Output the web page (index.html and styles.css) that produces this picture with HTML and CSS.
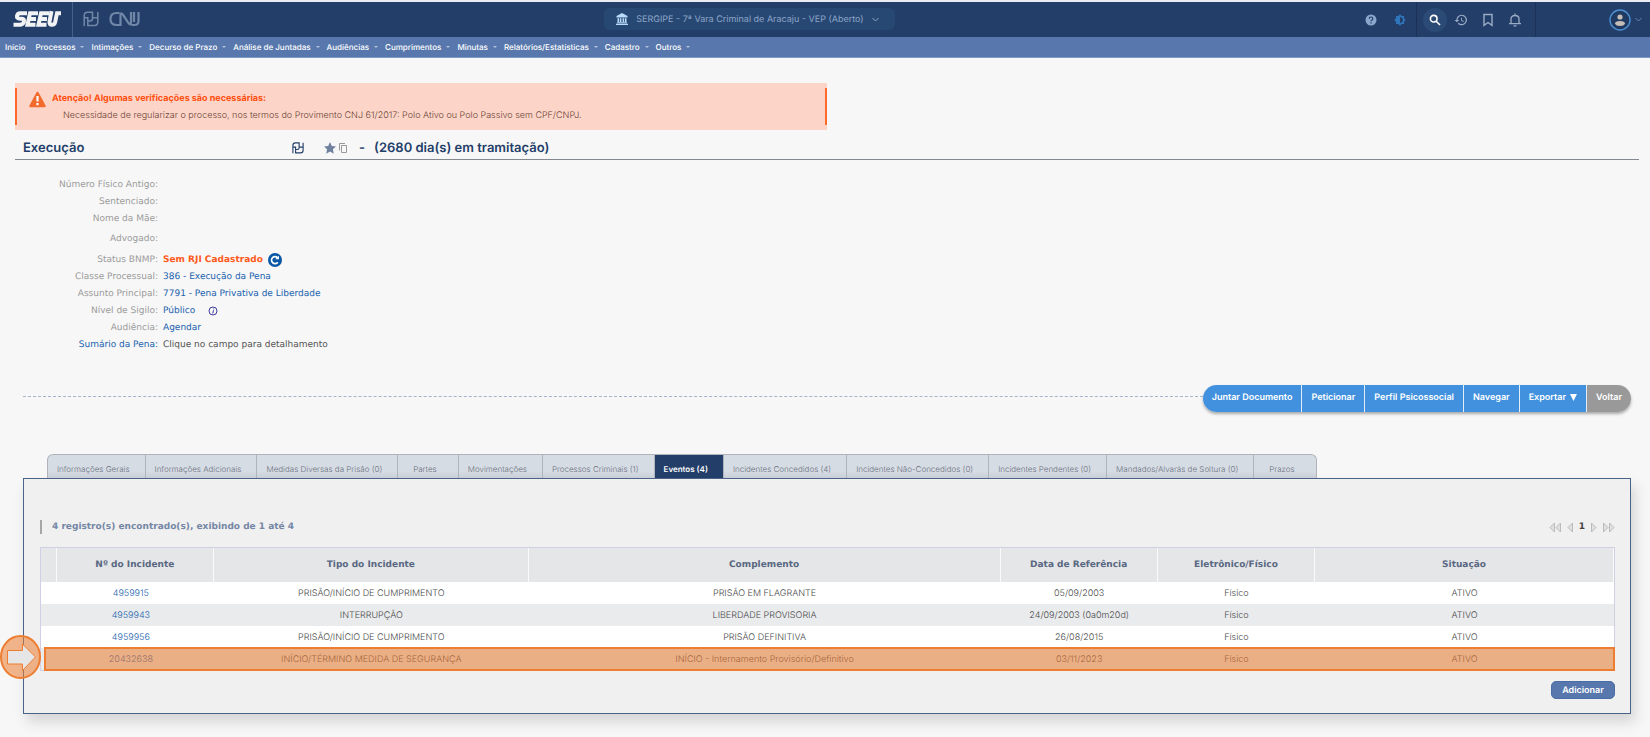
FILE: index.html
```html
<!DOCTYPE html>
<html lang="pt-BR">
<head>
<meta charset="utf-8">
<meta name="viewport" content="width=device-width, initial-scale=1">
<title>SEEU - Execução</title>
<link rel="stylesheet" href="styles.css">
</head>
<body>
<svg class="defs" aria-hidden="true">
  <symbol id="pdpj" viewBox="0 0 16 16"><path d="M1.200 15V4.500Q1.200 1.200 4.500 1.200H9.500V7.500Q9.500 10 7 10H4.800V6.800H1.200M4.800 10V14.500H11.500Q14.800 14.500 14.800 11V1M14.800 6.800H9.500" fill="none" stroke="currentColor" stroke-width="1.500"/></symbol>
</svg>
<header class="topbar">
  <div class="brand">
    <a class="brand-seeu" href="#" aria-label="SEEU">
      <svg width="48" height="18" viewBox="0 0 48 18" fill="none" stroke="#f0f2f4" stroke-width="4"><path d="M14 3.200H7.500Q4.500 3.200 4 5.800T7 8.800H8.500Q11.500 8.800 11 11.500T7.500 14.800H.5M25 3.200H17L14.500 14.800H22.500M15.500 9H23M36 3.200H28L25.500 14.800H33.500M26.500 9H34M38.500 1.200L36.500 11.500Q36 14.800 39 14.800Q41.500 14.800 42.200 12L44 3.200H48"/></svg>
    </a>
    <a class="brand-cnj" href="#" aria-label="PDPJ CNJ">
      <svg width="16" height="16"><use href="#pdpj"/></svg>
      <svg width="32" height="16" viewBox="0 0 32 16" fill="none" stroke="currentColor" stroke-width="2.200"><path d="M10.500 2H7.500Q1.500 2 1.500 8T7.500 14H10.500M11.500 15V4Q11.500 1 14 3.800L19.500 12Q22 15 22 12V1M25 1V11M29.500 1V10Q29.500 14 25.500 14H22.500"/></svg>
    </a>
  </div>
  <button class="court" type="button">
    <svg width="12" height="12" viewBox="0 0 12 12" fill="#b9dcfa"><path d="M6 0L11.500 3V4.500H.5V3ZM1.500 5.200H3.200V9H1.500ZM4 5.200H5.400V9H4ZM6.600 5.200H8V9H6.600ZM8.800 5.200H10.500V9H8.800ZM1 9.300H11V10.300H1ZM0 10.700H12V12H0Z"/></svg>
    <span>SERGIPE - 7ª Vara Criminal de Aracaju - VEP (Aberto)</span>
    <svg width="7" height="5" viewBox="0 0 7 5" fill="none" stroke="currentColor"><path d="M.5 1L3.500 4L6.500 1"/></svg>
  </button>
  <div class="tools">
    <div class="tool-group">
      <button class="tool help" type="button" aria-label="Ajuda"><svg width="12" height="12" viewBox="0 0 12 12"><circle cx="6" cy="6" r="5.500" fill="#8ba6cb"/><path d="M4.200 4.800Q4.200 3 6 3T7.800 4.700Q7.800 5.500 6.900 6T6 7.300M6 8.300V9.500" fill="none" stroke="#233e69" stroke-width="1.200"/></svg></button>
      <button class="tool" type="button" aria-label="Contraste"><svg width="12" height="12" viewBox="0 0 24 24" fill="#2f75bb"><path d="M20 15.300L23.300 12 20 8.700V4H15.300L12 .7 8.700 4H4V8.700L.7 12 4 15.300V20H8.700L12 23.300 15.300 20H20ZM12 18V6C15.300 6 18 8.700 18 12S15.300 18 12 18" fill-rule="evenodd"/></svg></button>
    </div>
    <div class="tool-group main">
      <button class="tool round" type="button" aria-label="Pesquisar"><svg width="12" height="12" viewBox="0 0 12 12" fill="none" stroke="#fff" stroke-width="1.600"><circle cx="4.700" cy="4.700" r="3.300"/><path d="M7.200 7.200L11 11"/></svg></button>
      <button class="tool" type="button" aria-label="Histórico"><svg width="14" height="14" viewBox="0 0 24 24" fill="#9bacc6"><path d="M13.500 8H12V13L16.300 15.500 17 14.300 13.500 12.200ZM13 3A9 9 0 0 0 4 12H1L5 16 9 12H6A7 7 0 1 1 8.100 16.900L6.700 18.300A9 9 0 1 0 13 3"/></svg></button>
      <button class="tool" type="button" aria-label="Favoritos"><svg width="14" height="14" viewBox="0 0 14 14" fill="none" stroke="#9bacc6" stroke-width="1.400"><path d="M3 1.500H11V12.300L7 9.500 3 12.300Z"/></svg></button>
      <button class="tool" type="button" aria-label="Notificações"><svg width="14" height="14" viewBox="0 0 14 14" fill="none" stroke="#9bacc6" stroke-width="1.300"><path d="M3 10.500V6Q3 2.500 7 2.500T11 6V10.500M1 10.700H13M7 .5V2.500M5.500 12.800H8.500"/></svg></button>
    </div>
    <button class="user" type="button" aria-label="Usuário">
      <svg width="22" height="22" viewBox="0 0 22 22"><circle cx="11" cy="11" r="10" fill="#213a61" stroke="#4d90d3" stroke-width="1.400"/><circle cx="11" cy="8" r="2.600" fill="#c4bdb8"/><path d="M6 14.500Q6 12 11 12T16 14.500Q15 17 11 17T6 14.500" fill="#c4bdb8"/></svg>
      <svg width="7" height="5" viewBox="0 0 7 5" fill="none" stroke="#6d87ad"><path d="M.5 1L3.500 4L6.500 1"/></svg>
    </button>
  </div>
</header>
<nav class="menu">
  <a href="#">Início</a>
  <a class="drop" href="#">Processos</a>
  <a class="drop" href="#">Intimações</a>
  <a class="drop" href="#">Decurso de Prazo</a>
  <a class="drop" href="#">Análise de Juntadas</a>
  <a class="drop" href="#">Audiências</a>
  <a class="drop" href="#">Cumprimentos</a>
  <a class="drop" href="#">Minutas</a>
  <a class="drop" href="#">Relatórios/Estatísticas</a>
  <a class="drop" href="#">Cadastro</a>
  <a class="drop" href="#">Outros</a>
</nav>
<main class="page">
  <section class="alert">
    <div class="alert-body">
      <svg width="17" height="17" viewBox="0 0 17 17"><path d="M8.500 2L15.500 15H1.500Z" fill="#f36b2c" stroke="#f36b2c" stroke-width="2.500" stroke-linejoin="round"/><path d="M8.500 5V10.500M8.500 12V14.200" stroke="#fff" stroke-width="2.200"/></svg>
      <div>
        <strong>Atenção! Algumas verificações são necessárias:</strong>
        <p>Necessidade de regularizar o processo, nos termos do Provimento CNJ 61/2017: Polo Ativo ou Polo Passivo sem CPF/CNPJ.</p>
      </div>
    </div>
  </section>
  <h1 class="title">
    <span class="title-name">Execução</span>
    <svg class="title-logo" width="12" height="12"><use href="#pdpj"/></svg>
    <svg class="star" width="12" height="12" viewBox="0 0 24 24" fill="#6f819e"><path d="M12 0L15.600 8 24 9 17.800 14.700 19.500 23.500 12 19 4.500 23.500 6.200 14.700 0 9 8.400 8Z"/></svg>
    <svg class="copy" width="8" height="10" viewBox="0 0 8 10" fill="none" stroke="#999"><path d="M2.500 2.500H7.500V9.500H2.500ZM.5 7.500V.5H6"/></svg>
    <span class="dash">-</span>
    <span>(2680 dia(s) em tramitação)</span>
  </h1>
  <dl class="details">
    <dt>Número Físico Antigo:</dt><dd></dd>
    <dt>Sentenciado:</dt><dd></dd>
    <dt>Nome da Mãe:</dt><dd></dd>
    <dt>Advogado:</dt><dd></dd>
    <dt>Status BNMP:</dt>
    <dd><strong class="warn">Sem RJI Cadastrado</strong><button class="refresh" type="button" aria-label="Atualizar"><svg width="14" height="14" viewBox="0 0 14 14"><circle cx="7" cy="7" r="7" fill="#0957a5"/><path d="M9.800 9.200A3.500 3.500 0 1 1 9.500 4.600" fill="none" stroke="#fff" stroke-width="1.700"/><path d="M7.200 6.300H11V2.800Z" fill="#fff"/></svg></button></dd>
    <dt>Classe Processual:</dt><dd><a href="#">386 - Execução da Pena</a></dd>
    <dt>Assunto Principal:</dt><dd><a href="#">7791 - Pena Privativa de Liberdade</a></dd>
    <dt>Nível de Sigilo:</dt><dd><a href="#">Público</a><svg class="info" width="10" height="10" viewBox="0 0 10 10" fill="none" stroke="#3f3d9e"><circle cx="5" cy="5" r="4"/><path d="M5.500 4.200L4.700 7.500M5.700 2.500V3.400"/></svg></dd>
    <dt>Audiência:</dt><dd><a href="#">Agendar</a></dd>
    <dt><a href="#">Sumário da Pena:</a></dt><dd>Clique no campo para detalhamento</dd>
  </dl>
  <div class="actions">
    <div class="rule"></div>
    <div class="button-bar">
      <button type="button">Juntar Documento</button>
      <button type="button">Peticionar</button>
      <button type="button">Perfil Psicossocial</button>
      <button type="button">Navegar</button>
      <button type="button">Exportar <svg width="7" height="7" viewBox="0 0 7 7" fill="#fff"><path d="M0 0H7L3.500 7Z"/></svg></button>
      <button class="back" type="button">Voltar</button>
    </div>
  </div>
  <div class="tabs" role="tablist">
    <button role="tab" type="button">Informações Gerais</button>
    <button role="tab" type="button">Informações Adicionais</button>
    <button role="tab" type="button">Medidas Diversas da Prisão (0)</button>
    <button class="short" role="tab" type="button">Partes</button>
    <button role="tab" type="button">Movimentações</button>
    <button role="tab" type="button">Processos Criminais (1)</button>
    <button class="active" role="tab" type="button" aria-selected="true">Eventos (4)</button>
    <button role="tab" type="button">Incidentes Concedidos (4)</button>
    <button role="tab" type="button">Incidentes Não-Concedidos (0)</button>
    <button role="tab" type="button">Incidentes Pendentes (0)</button>
    <button role="tab" type="button">Mandados/Alvarás de Soltura (0)</button>
    <button class="short" role="tab" type="button">Prazos</button>
  </div>
  <section class="panel">
    <div class="summary">
      <h2>4 registro(s) encontrado(s), exibindo de 1 até 4</h2>
      <div class="pager">
        <button type="button" aria-label="Primeira"><svg width="13" height="11" viewBox="0 0 13 11"><path d="M5.500 1V10L1 5.500ZM11.500 1V10L7 5.500Z"/></svg></button>
        <button type="button" aria-label="Anterior"><svg width="7" height="11" viewBox="0 0 7 11"><path d="M5.500 1V10L1 5.500Z"/></svg></button>
        <strong>1</strong>
        <button type="button" aria-label="Próxima"><svg width="7" height="11" viewBox="0 0 7 11"><path d="M1.500 1V10L6 5.500Z"/></svg></button>
        <button type="button" aria-label="Última"><svg width="13" height="11" viewBox="0 0 13 11"><path d="M1.500 1V10L6 5.500ZM7.500 1V10L12 5.500Z"/></svg></button>
      </div>
    </div>
    <div class="table-wrap">
      <table class="events">
        <colgroup><col class="c1"><col class="c10"><col class="c20"><col class="c30"><col class="c10"><col class="c10"><col class="c19"></colgroup>
        <thead>
          <tr><th></th><th>Nº do Incidente</th><th>Tipo do Incidente</th><th>Complemento</th><th>Data de Referência</th><th>Eletrônico/Físico</th><th>Situação</th></tr>
        </thead>
        <tbody>
          <tr><td></td><td class="number"><a href="#">4959915</a></td><td>PRISÃO/INÍCIO DE CUMPRIMENTO</td><td>PRISÃO EM FLAGRANTE</td><td>05/09/2003</td><td>Físico</td><td>ATIVO</td></tr>
          <tr><td></td><td class="number"><a href="#">4959943</a></td><td>INTERRUPÇÃO</td><td>LIBERDADE PROVISORIA</td><td>24/09/2003 (0a0m20d)</td><td>Físico</td><td>ATIVO</td></tr>
          <tr><td></td><td class="number"><a href="#">4959956</a></td><td>PRISÃO/INÍCIO DE CUMPRIMENTO</td><td>PRISÃO DEFINITIVA</td><td>26/08/2015</td><td>Físico</td><td>ATIVO</td></tr>
          <tr><td></td><td class="number"><a href="#">20432638</a></td><td>INÍCIO/TÉRMINO MEDIDA DE SEGURANÇA</td><td>INÍCIO - Internamento Provisório/Definitivo</td><td>03/11/2023</td><td>Físico</td><td>ATIVO</td></tr>
        </tbody>
      </table>
      <div class="highlight"></div>
      <svg class="pointer" width="42" height="44" viewBox="0 0 42 44"><ellipse cx="20.500" cy="22" rx="19.500" ry="21" fill="#ed7d31" fill-opacity=".55" stroke="#ed7d31" stroke-width="2"/><path d="M7.500 15.500H22.500V9L35.500 22 22.500 35.500V29H7.500Z" fill="#e7e6e6" stroke="#ed7d31"/></svg>
    </div>
    <div class="panel-foot"><button class="add" type="button">Adicionar</button></div>
  </section>
</main>
</body>
</html>
```

FILE: styles.css
```css
* { box-sizing: border-box; }
body {
  margin: 0;
  background: #f7f7f7;
  color: #4a4a4a;
  font-family: Inter, "Liberation Sans", sans-serif;
  font-size: 9px;
  text-rendering: geometricPrecision;
}
button { font: inherit; color: inherit; border: 0; background: none; padding: 0; cursor: pointer; text-rendering: inherit; }
a { text-decoration: none; color: #1a62ae; }
svg { display: block; flex: none; }
.defs { position: absolute; width: 0; height: 0; }

/* Top bar */
.topbar {
  display: grid;
  grid-template-columns: 4fr auto 5fr;
  align-items: stretch;
  height: 37px;
  border-top: 2px solid #e9edf2;
  background: #233e69;
}
.brand { display: flex; }
.brand a { display: flex; align-items: center; }
.brand-seeu { padding: 0 11px 0 13px; border-right: 1px solid #45608a; }
.brand-cnj { gap: 10px; padding-left: 10px; color: #7187a8; }
.brand svg { margin-bottom: 2px; }
.court {
  display: flex;
  align-items: center;
  align-self: center;
  gap: 8px;
  height: 22px;
  margin-bottom: 1px;
  padding: 0 16px 0 12px;
  border-radius: 6px;
  background: #284874;
  color: #8ca5c6;
}
.tools { display: flex; justify-content: flex-end; }
.tool-group { display: flex; align-items: center; gap: 17px; padding-right: 10px; }
.tool-group.main {
  gap: 13px;
  padding: 0 13px 0 6px;
  border-left: 1px solid #1b3157;
  border-right: 1px solid #1b3157;
}
.tool.round {
  display: grid;
  place-items: center;
  width: 24px;
  height: 24px;
  margin-right: -6px;
  border-radius: 50%;
  background: #2b4a76;
}
.user { display: flex; align-items: center; gap: 4px; margin-left: 73px; padding-right: 8px; }

/* Menu */
.menu {
  display: flex;
  align-items: center;
  gap: 7px;
  height: 21px;
  padding: 0 5px;
  border-bottom: 1px solid #7f9ac6;
  background: #5878ad;
  font-size: 8px;
  font-weight: 500;
}
.menu a { color: #fff; }
.menu a:first-child { margin-right: 3px; }
.drop::after {
  content: "";
  display: inline-block;
  margin: 0 0 2px 5px;
  border: 2px solid transparent;
  border-top-color: #b3c3de;
  border-bottom: 0;
}

/* Content */
.page { padding: 25px 11px 20px 15px; }
.alert { width: 50%; padding: 5px 0; background: #fcd5c8; }
.alert-body {
  display: flex;
  gap: 6px;
  height: 37px;
  padding: 3px 12px;
  border: solid #ff6a2b;
  border-width: 0 2px;
}
.alert strong { color: #ff4f0f; line-height: 16px; }
.alert p { margin: 0 0 0 11px; color: #6c4336; font-weight: 300; line-height: 17px; }
.title {
  display: flex;
  align-items: center;
  height: 30px;
  margin: 0;
  padding: 7px 8px 0;
  border-bottom: 1px solid #84898f;
  color: #233e69;
  font-size: 13px;
  font-weight: 600;
}
.title-name { width: 269px; }
.star { margin-left: 20px; }
.copy { margin-left: 3px; }
.dash { margin: 0 9px 0 12px; }

.details {
  display: grid;
  grid-template-columns: 143px 1fr;
  grid-template-rows: repeat(3, 17px) 24px;
  grid-auto-rows: 17px;
  column-gap: 5px;
  margin: 16px 0 0;
  align-items: center;
  color: #9b9b9b;
  font-family: Verdana, "DejaVu Sans", sans-serif;
}
.details dt { text-align: right; }
.details dd { display: flex; align-items: center; margin: 0; color: #555; }
.warn { color: #ff5a1c; }
.refresh { margin-left: 5px; }
.info { margin-left: 13px; }

.actions { display: flex; align-items: flex-start; margin: 32px 8px 0; }
.rule { flex: 1; margin-top: 11px; border-top: 1px dashed #a3b4ce; }
.button-bar {
  display: flex;
  height: 27px;
  border-radius: 14px;
  box-shadow: 0 2px 3px #aaa;
  overflow: hidden;
}
.button-bar button {
  display: flex;
  align-items: center;
  gap: 4px;
  padding: 0 9px 2px;
  border-right: 1px solid #e2edf7;
  background: #4191de;
  color: #fff;
  font-weight: 600;
}
.button-bar .back { border: 0; background: #999; }

/* Tabs */
.tabs { display: flex; margin: 42px 0 0 32px; }
.tabs button {
  height: 24px;
  padding: 5px 15px 0 9px;
  border: solid #b0b4ba;
  border-width: 1px 1px 0 0;
  background: linear-gradient(#d6dce4 70%, #c9ced8);
  color: #6b7180;
  font-size: 8px;
  font-weight: 300;
}
.tabs button:first-child { border-left-width: 1px; border-top-left-radius: 6px; }
.tabs button:last-child { border-top-right-radius: 6px; }
.tabs .short { padding: 5px 21px 0 15px; }
.tabs .active { background: #233e69; color: #fff; font-weight: 600; }

.panel {
  margin: 0 8px;
  padding: 41px 15px 14px 16px;
  border: 1px solid #4b6289;
  background: #f0f0f0;
  box-shadow: 4px 8px 12px #d5d5d5;
}
.summary { display: flex; align-items: center; justify-content: space-between; }
.summary h2 {
  margin: 0;
  padding-left: 10px;
  border-left: 2px solid #a6a6a6;
  color: #7587a5;
  font-family: Verdana, "DejaVu Sans", sans-serif;
  font-size: 9px;
  line-height: 14px;
}
.pager {
  display: flex;
  align-items: center;
  gap: 5px;
  color: #444;
  font-family: Verdana, "DejaVu Sans", sans-serif;
}
.pager svg { fill: #e0e0e0; stroke: #bbb; }

.table-wrap { position: relative; margin-top: 13px; }
.events {
  width: 100%;
  border: 1px solid #d2cee6;
  border-collapse: separate;
  border-spacing: 0;
  table-layout: fixed;
  text-align: center;
}
.c1 { width: 1%; }
.c10 { width: 10%; }
.c19 { width: 19%; }
.c20 { width: 20%; }
.c30 { width: 30%; }
.events th {
  height: 34px;
  padding: 0;
  border-right: 1px solid #fafafa;
  background: #e4e6e8;
  color: #5a6882;
  font-family: Verdana, "DejaVu Sans", sans-serif;
}
.events td { height: 22px; padding: 0; background: #fff; font-weight: 300; }
.events .number { padding-right: 9px; }
.events tr:nth-child(even) td { background: #e9ebed; }
.highlight {
  position: absolute;
  right: 0;
  bottom: 0;
  left: 4px;
  height: 24px;
  border: 2px solid #ed7d31;
  background: rgb(237 125 49 / 55%);
}
.pointer { position: absolute; bottom: -8px; left: -40px; }
.panel-foot { display: flex; justify-content: flex-end; margin-top: 10px; }
.add {
  width: 64px;
  height: 18px;
  border: 1px solid #486ca5;
  border-radius: 5px;
  background: #5878ad;
  color: #fff;
  font-weight: 600;
}
```
